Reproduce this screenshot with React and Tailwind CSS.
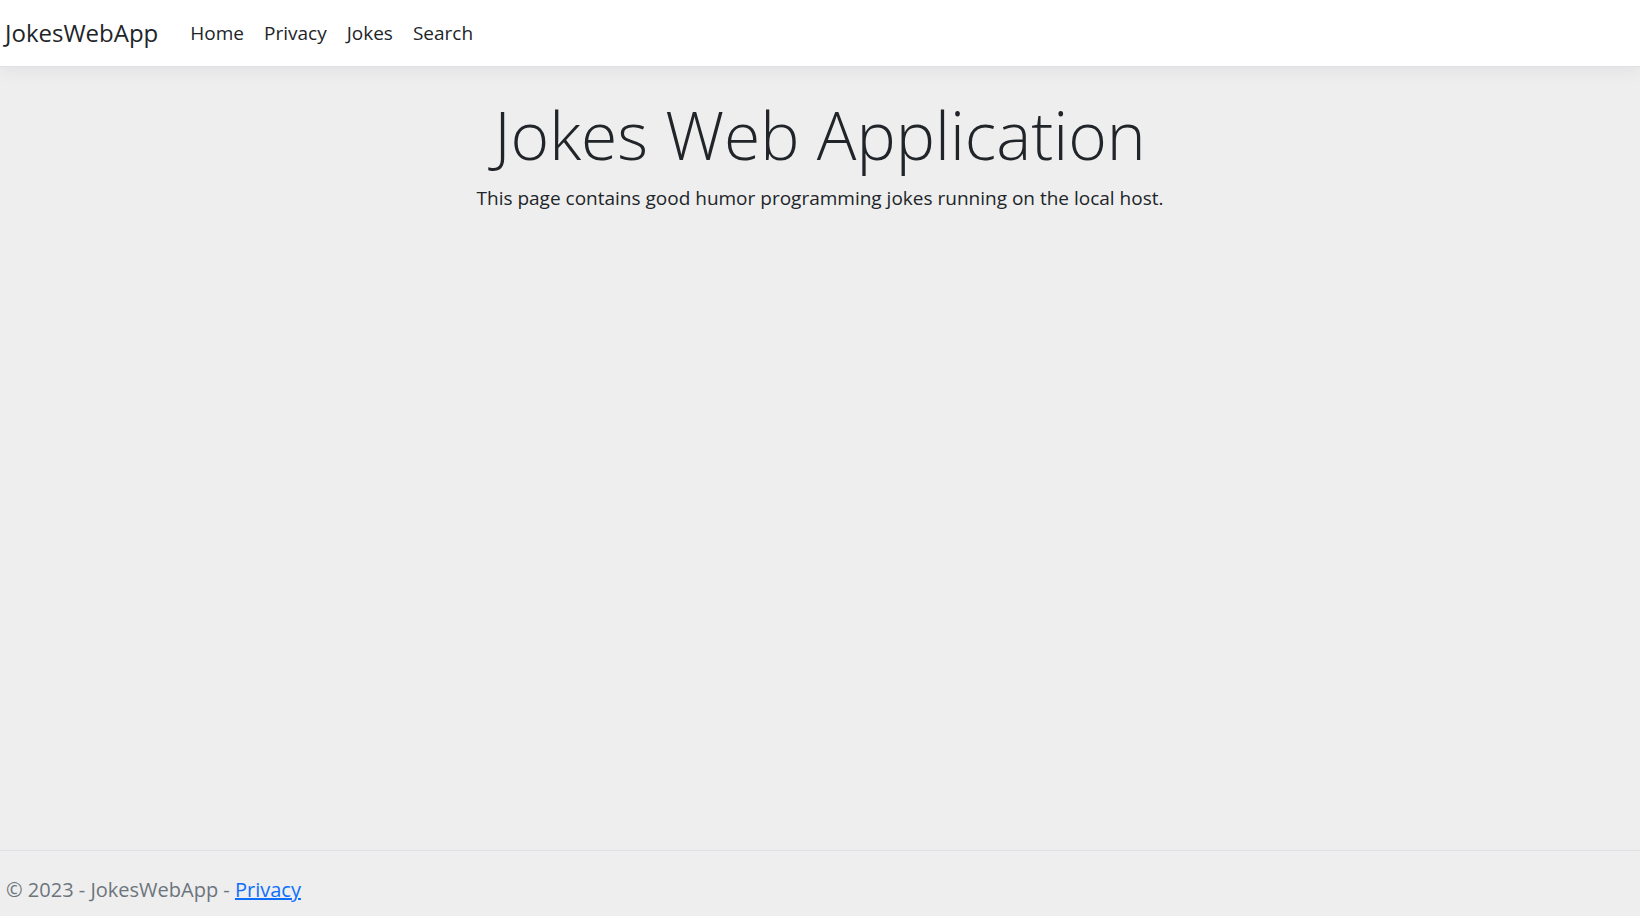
export default function App() {
  const links = ["Home", "Privacy", "Jokes", "Search"];

  return (
    <div
      className="flex min-h-screen flex-col bg-[#eeeeee] text-[#212529]"
      style={{ fontFamily: '"Segoe UI", "Open Sans", "Noto Sans", sans-serif' }}
    >
      <header className="relative z-10 flex h-[67px] shrink-0 items-center border-b border-[#dee2e6] bg-white px-[5px] shadow-[0_5px_15px_rgba(0,0,0,0.05)]">
        <a className="mr-[22px] text-[24px] leading-none text-[#212529]">JokesWebApp</a>
        <nav className="flex items-center">
          {links.map((l) => (
            <a key={l} className="px-[10px] text-[19px] leading-none text-[#212529]">
              {l}
            </a>
          ))}
        </nav>
      </header>

      <main className="flex-1 px-4 pt-[28px] text-center">
        <h1 className="text-[66px] font-light leading-[1.2]">Jokes Web Application</h1>
        <p className="mt-[10px] text-[19px] leading-[1.5]">
          This page contains good humor programming jokes running on the local host.
        </p>
      </main>

      <footer className="h-[66px] shrink-0 border-t border-[#dee2e6] px-[6px] pt-[24px] text-[20px] leading-[30px] text-[#6c757d]">
        © 2023 - JokesWebApp - <a className="text-[#0d6efd] underline">Privacy</a>
      </footer>
    </div>
  );
}
